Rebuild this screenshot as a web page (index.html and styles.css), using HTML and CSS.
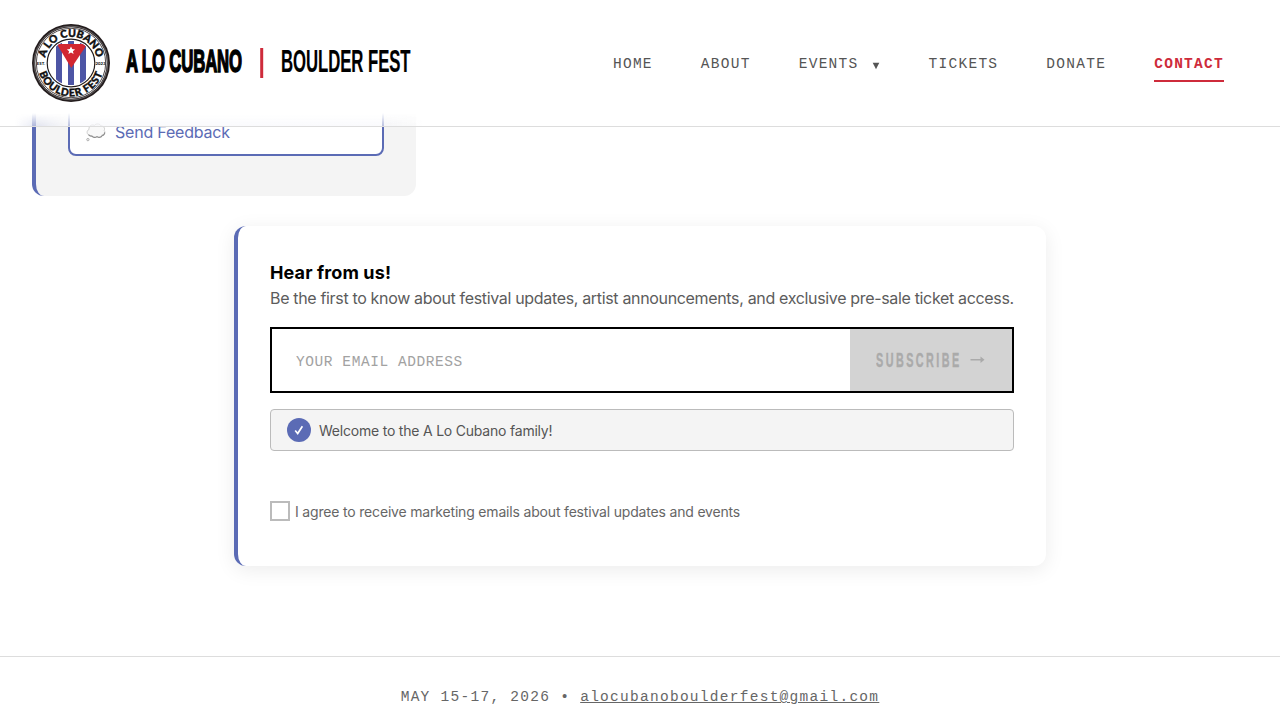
FILE: index.html
```html
<!DOCTYPE html>
<html lang="en">
<head>
<meta charset="utf-8">
<title>Contact | A Lo Cubano Boulder Fest</title>
<link rel="stylesheet" href="styles.css">
</head>
<body>
<header class="header">
  <a class="brand">
    <svg class="logo" viewBox="0 0 78 78" width="78" height="78">
      <defs>
        <path id="arcTop" d="M12.800 39a26.200 26.200 0 0 1 52.400 0"/>
        <path id="arcBottom" d="M5.600 39a33.400 33.400 0 0 0 66.800 0"/>
        <clipPath id="flag"><circle cx="39" cy="39" r="22.200"/></clipPath>
      </defs>
      <circle cx="39" cy="39" r="39" fill="#231c1d"/>
      <circle cx="39" cy="39" r="35.800" fill="#fff"/>
      <circle cx="39" cy="39" r="36.800" fill="none" stroke="#aaa" stroke-width=".5"/>
      <circle cx="39" cy="39" r="34.700" fill="none" stroke="#231c1d" stroke-width=".8"/>
      <circle cx="39" cy="39" r="23.800" fill="none" stroke="#231c1d" stroke-width="1.200"/>
      <g clip-path="url(#flag)">
        <path d="M24 17h6v44h-6zM36 17h6v44h-6zM48 17h6v44h-6z" fill="#4d55a5"/>
        <path d="M26 20h27l1 2L39.300 44 26 22z" fill="#d22630"/>
      </g>
      <path d="M39 22.500l1.200 2.600 2.900.3-2.200 1.900.7 2.800-2.600-1.500-2.600 1.500.7-2.800-2.200-1.900 2.900-.3z" fill="#fff"/>
      <g fill="#111" stroke="#111" stroke-width=".4" font-family="Lato, sans-serif" font-weight="900" font-size="10.500">
        <text><textPath href="#arcTop" startOffset="50%" text-anchor="middle">A LO CUBANO</textPath></text>
        <text><textPath href="#arcBottom" startOffset="50%" text-anchor="middle" letter-spacing=".7">BOULDER FEST</textPath></text>
        <text x="4.800" y="40.500" font-size="4.300" stroke="none">EST.</text>
        <text x="63.500" y="40.500" font-size="4.300" stroke="none">2023</text>
      </g>
    </svg>
    <svg class="wordmark" width="300" height="36" viewBox="0 0 300 36">
      <text transform="translate(1 27) scale(.54 1)" textLength="215" class="word-strong">A LO CUBANO</text>
      <path d="M135.200 3h3v30h-3z" class="word-bar"/>
      <text transform="translate(156 27) scale(.54 1)" textLength="240" class="word-light">BOULDER FEST</text>
    </svg>
  </a>
  <nav class="nav">
    <a>HOME</a><a>ABOUT</a>
    <a class="drop">EVENTS<svg width="8" height="8" viewBox="0 0 8 8"><path d="M.7.700h6.600L4 7.300z" fill="#555"/></svg></a>
    <a>TICKETS</a><a>DONATE</a><a class="active">CONTACT</a>
  </nav>
</header>
<main>
  <section class="card">
    <a class="feedback">
      <svg width="20" height="20" viewBox="0 0 20 20"><path d="M3.500 13.500C.5 12.500.3 8.500 3 7.500 2.500 4 6 2 8.300 3.400c2-2.400 6-1.800 6.700.7 2.800-.3 4.300 2.200 3.200 4.300 1.700 2.200.4 4.800-1.900 5-1 2.200-3.800 2.400-5.200 1.200-1.800 1.500-4.400 1.200-5.200-.5-1 .3-1.800 0-2.400-.6z" fill="#f9f9f9" stroke="#c4c4c4" stroke-width=".8"/><path d="M2.500 12.500c.7 1.200 2 1.700 3.500 1.600 1.200 1.700 3.500 1.600 5 .5 1.800 1.300 4.300.8 5.200-1.200 1.700-.1 2.600-1.600 2.300-3" fill="none" stroke="#8d8d8d" stroke-width="1.100"/><circle cx="1.900" cy="17.600" r="1.200" fill="#eee" stroke="#999" stroke-width=".7"/></svg>
      <span>Send Feedback</span>
    </a>
  </section>
  <form class="signup">
    <h2>Hear from us!</h2>
    <p class="lead">Be the first to know about festival updates, artist announcements, and exclusive pre-sale ticket access.</p>
    <div class="field">
      <input type="email" placeholder="YOUR EMAIL ADDRESS">
      <div class="subscribe">
        <svg width="112" height="24" viewBox="0 0 112 24"><text transform="translate(0 19) scale(.54 1)" textLength="154">SUBSCRIBE</text><path d="M94.500 10.900h10V8.500l4 3.300-4 3.300v-2.700h-10z" fill="#aaa"/></svg>
      </div>
    </div>
    <div class="notice">
      <svg width="24" height="24" viewBox="0 0 24 24"><circle cx="12" cy="12" r="12" fill="#5b6bb5"/><path d="M8.200 12.500l2.500 3 4.700-7.300" fill="none" stroke="#fff" stroke-width="1.700"/></svg>
      <span>Welcome to the A Lo Cubano family!</span>
    </div>
    <label class="consent"><span class="box"></span><span class="consent-text">I agree to receive marketing emails about festival updates and events</span></label>
  </form>
</main>
<footer class="footer"><span>MAY 15-17, 2026 • </span><a>alocubanoboulderfest@gmail.com</a></footer>
</body>
</html>
```
FILE: styles.css
```css
* { box-sizing: border-box; }
body { margin: 0; height: 720px; overflow: hidden; background: #fff; font-family: Inter, sans-serif; color: #555; }
.header { position: relative; z-index: 2; height: 127px; padding: 0 56px 0 32px; display: flex; align-items: center; justify-content: space-between; border-bottom: 1px solid #ddd; background: linear-gradient(#fff 113px, rgba(255,255,255,.6) 126px); }
.header::after { content: ""; position: absolute; left: 15px; bottom: 0; width: 410px; height: 12px; background: linear-gradient(90deg, rgba(91,107,181,0), rgba(91,107,181,.15) 5%, rgba(91,107,181,.03) 12%, rgba(91,107,181,.03) 90%, rgba(91,107,181,0)); mask-image: linear-gradient(transparent, #000); }
.brand { display: flex; align-items: center; gap: 15px; }
.logo { display: block; }
.wordmark { display: block; }
.wordmark text { font-family: "Liberation Sans", sans-serif; font-weight: 700; font-size: 31px; fill: #000; }
.wordmark .word-strong { stroke: #000; stroke-width: 1.600px; }
.wordmark .word-light { stroke: #000; stroke-width: .2px; }
.word-bar { fill: #ce2b3b; }
.nav { display: flex; gap: 48px; font: 14.500px/20px "Liberation Mono", monospace; letter-spacing: 1.270px; padding-top: 10px; }
.nav a { height: 28px; }
.nav .drop { display: flex; }
.nav .drop svg { margin: 8px 1px 0 13px; }
.nav .active { font-weight: 700; color: #ce2b3b; border-bottom: 2px solid #ce2b3b; }
.card { width: 384px; height: 140px; margin: -71px 0 0 32px; padding: 46px 32px 40px; border-left: 4px solid #5b6bb5; border-radius: 12px; background: #f4f4f4; }
.feedback { display: flex; align-items: center; height: 54px; padding: 5px 16px 0; gap: 9px; border: 2px solid #5b6bb5; border-radius: 8px; background: #fff; color: #5b6bb5; font-size: 16px; letter-spacing: -.2px; }
.signup { width: 812px; height: 340px; margin: 30.400px auto 0; padding: 35px 32px 0; border-left: 4px solid #5b6bb5; border-radius: 12px; background: #fff; box-shadow: 0 4px 20px rgba(0,0,0,.08); }
.signup h2 { margin: 0; font-size: 18px; line-height: 24px; letter-spacing: .120px; color: #000; }
.lead { margin: 1px 0 16px; font-size: 16px; line-height: 25px; letter-spacing: -.336px; white-space: nowrap; color: #5c5c5c; }
.field { display: flex; height: 66px; border: 2px solid #000; }
.field input { flex: 1; min-width: 0; border: 0; padding: 4px 24px 0; background: #fff; font: 14.500px "Liberation Mono", monospace; letter-spacing: .570px; }
.field input::placeholder { color: #a2a2a2; opacity: 1; }
.subscribe { display: flex; align-items: center; width: 162px; padding-left: 26px; background: #d3d3d3; }
.subscribe text { font: 700 20px "Liberation Sans", sans-serif; fill: #aaa; stroke: #aaa; stroke-width: .4px; }
.notice { display: flex; align-items: center; gap: 8px; height: 42px; margin-top: 16px; padding: 0 16px; border: 1px solid #bbb; border-radius: 4px; background: #f4f4f4; font-size: 14px; letter-spacing: -.210px; }
.notice span { padding-top: 1px; }
.consent { display: flex; align-items: center; gap: 5px; margin-top: 50px; height: 20px; font-size: 14px; letter-spacing: -.180px; white-space: nowrap; color: #666; }
.consent-text { padding-top: 1px; }
.box { width: 20px; height: 20px; border: 2px solid #bbb; background: #fff; }
.footer { display: flex; justify-content: center; height: 64px; margin-top: 89.600px; padding-top: 30px; border-top: 1px solid #ddd; font: 14.500px/20px "Liberation Mono", monospace; letter-spacing: 1.270px; color: #666; white-space: pre; }
.footer a { text-decoration: underline; }
```
